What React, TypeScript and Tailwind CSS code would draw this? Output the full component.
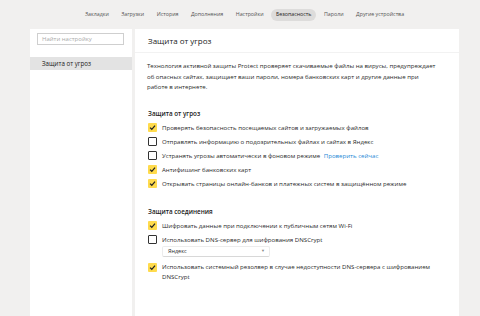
import React from "react";

const tabs = ["Закладки", "Загрузки", "История", "Дополнения", "Настройки", "Безопасность", "Пароли", "Другие устройства"];

function Check({ checked }: { checked: boolean }) {
  if (checked) {
    return (
      <span className="w-[9px] h-[9px] shrink-0 rounded-[1px] bg-[#ffdb4d] flex items-center justify-center">
        <svg width="7" height="7" viewBox="0 0 10 10">
          <path d="M1.5 5.2 L4 7.6 L8.6 2.4" fill="none" stroke="#222" strokeWidth="1.8" />
        </svg>
      </span>
    );
  }
  return <span className="block w-[9px] h-[9px] shrink-0 rounded-[1px] border border-[#333] bg-white" />;
}

function Row({ checked, children }: { checked: boolean; children: React.ReactNode }) {
  return (
    <div className="flex items-start gap-[5px] h-[14px]">
      <span className="block mt-[1px]"><Check checked={checked} /></span>
      <span className="leading-[11px]">{children}</span>
    </div>
  );
}

export default function App() {
  return (
    <div
      className="w-[480px] h-[316px] bg-[#f1f0ef] overflow-hidden flex flex-col text-[#222]"
      style={{ fontFamily: '"Open Sans", "Noto Sans", sans-serif' }}
    >
      <div className="h-[29px] flex items-center justify-center pl-[9px] gap-[2.5px] text-[5.3px] text-[#555]">
        {tabs.map((t) => (
          <span
            key={t}
            className={
              "px-[5px] h-[12px] flex items-center rounded-[6px] " +
              (t === "Безопасность" ? "bg-[#dddcdb] text-[#222]" : "")
            }
          >
            {t}
          </span>
        ))}
      </div>
      <div className="flex flex-1 pl-[30px] gap-[3px]">
        <div className="w-[102px] bg-white flex flex-col">
          <div className="px-[7px] pt-[4px] pb-[12px]">
            <div className="h-[12px] w-[87px] border border-[#cfcfcf] text-[6px] text-[#aaa] pl-[4px] flex items-center">
              Найти настройку
            </div>
          </div>
          <div className="h-[13px] bg-[#e3e3e3] text-[6.2px] pl-[12px] flex items-center">Защита от угроз</div>
        </div>
        <div className="w-[324px] bg-white flex flex-col">
          <div className="h-[24px] border-b border-[#f2f2f2] flex items-center pl-[13px] text-[8px] text-[#222]">
            Защита от угроз
          </div>
          <div className="pl-[12px] pr-[10px] pt-[8px] text-[6.1px] leading-[10px] text-[#2a2a2a]">
            <p className="leading-[10.5px]">
              Технология активной защиты Protect проверяет скачиваемые файлы на вирусы, предупреждает
              <br />
              об опасных сайтах, защищает ваши пароли, номера банковских карт и другие данные при
              <br />
              работе в интернете.
            </p>
            <div className="mt-[16px] font-semibold text-[#222] text-[6.3px] leading-[10px] pl-[1px]">Защита от угроз</div>
            <div className="mt-[3px] pl-[1px]">
              <Row checked>Проверять безопасность посещаемых сайтов и загружаемых файлов</Row>
              <Row checked={false}>Отправлять информацию о подозрительных файлах и сайтах в Яндекс</Row>
              <Row checked={false}>
                Устранять угрозы автоматически в фоновом режиме{" "}
                <span className="text-[#1e88d6] ml-[2px]">Проверить сейчас</span>
              </Row>
              <Row checked>Антифишинг банковских карт</Row>
              <Row checked>Открывать страницы онлайн-банков и платежных систем в защищённом режиме</Row>
            </div>
            <div className="mt-[15px] font-semibold text-[#222] text-[6.3px] leading-[10px] pl-[1px]">Защита соединения</div>
            <div className="mt-[3px] pl-[1px]">
              <Row checked>Шифровать данные при подключении к публичным сетям Wi-Fi</Row>
              <Row checked={false}>Использовать DNS-сервер для шифрования DNSCrypt</Row>
              <div className="ml-[14px] mt-[-2px] mb-[5px] h-[11px] w-[108px] border border-[#ececec] border-b-[#d8d8d8] rounded-[2px] flex items-center justify-between pl-[5px] pr-[4px] text-[5.5px]">
                <span>Яндекс</span>
                <span className="text-[4px] text-[#888]">▼</span>
              </div>
              <div className="flex items-start gap-[5px]">
                <span className="block mt-[1px]"><Check checked /></span>
                <span className="leading-[10px]">
                  Использовать системный резолвер в случае недоступности DNS-сервера с шифрованием
                  <br />
                  DNSCrypt
                </span>
              </div>
            </div>
          </div>
        </div>
      </div>
    </div>
  );
}
